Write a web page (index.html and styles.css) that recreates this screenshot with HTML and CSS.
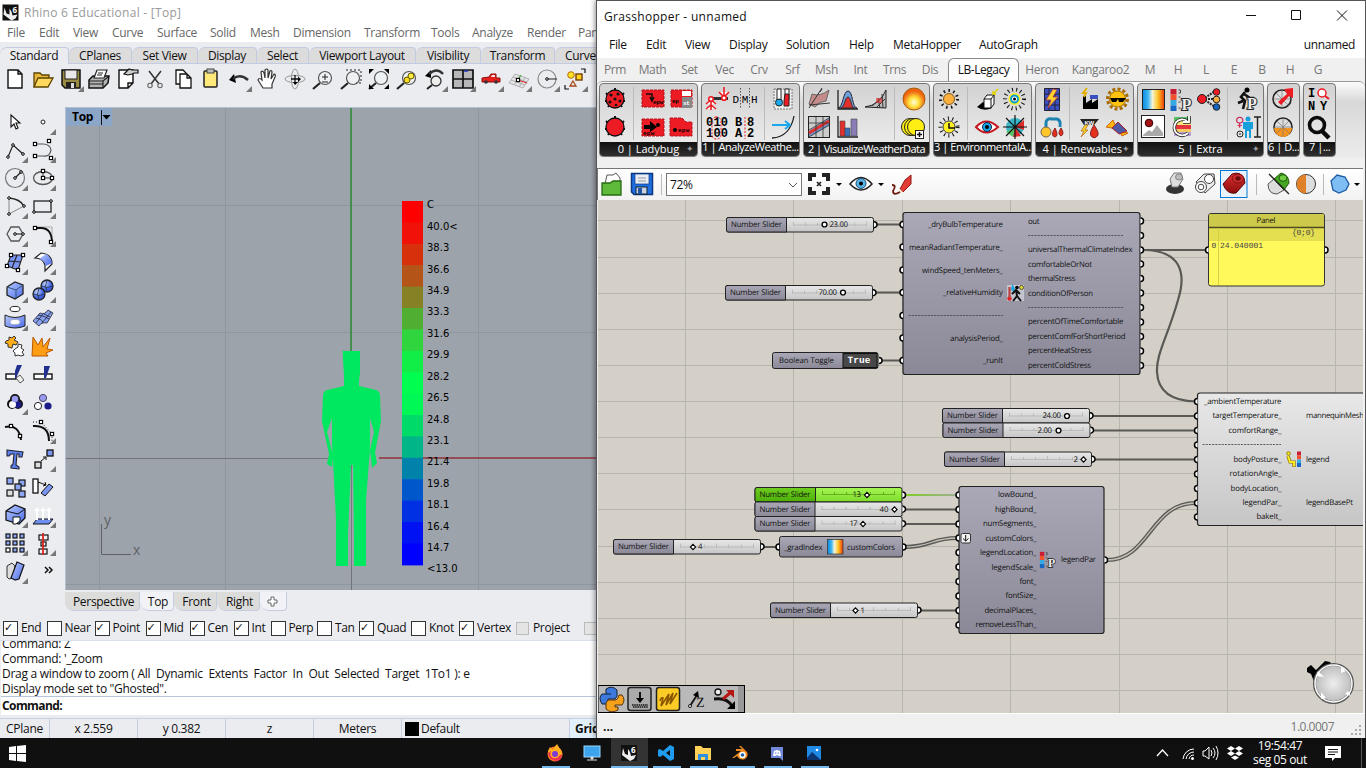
FILE: index.html
```html
<!DOCTYPE html>
<html lang="en">
<head>
<meta charset="utf-8">
<title>Rhino 6 and Grasshopper</title>
<link rel="stylesheet" href="styles.css">
</head>
<body>
<svg class="defs" width="0" height="0">
  <defs>
    <linearGradient id="gNode" x2="0" y2="1"><stop offset="0" stop-color="#aaa8b7"/><stop offset="1" stop-color="#8b8997"/></linearGradient>
    <linearGradient id="gLight" x2="0" y2="1"><stop offset="0" stop-color="#e8e8e8"/><stop offset="1" stop-color="#c6c6c6"/></linearGradient>
    <linearGradient id="gGreen" x2="0" y2="1"><stop offset="0" stop-color="#6fce20"/><stop offset="1" stop-color="#4cae08"/></linearGradient>
    <linearGradient id="gLime" x2="0" y2="1"><stop offset="0" stop-color="#a4f752"/><stop offset="1" stop-color="#7fdb2c"/></linearGradient>
    <linearGradient id="gSpec"><stop offset="0" stop-color="#0a8ae0"/><stop offset=".25" stop-color="#3db4f2"/><stop offset=".45" stop-color="#f4f4d8"/><stop offset=".7" stop-color="#ffc423"/><stop offset="1" stop-color="#e8380c"/></linearGradient>
    <linearGradient id="gBlue" x2="1" y2="1"><stop offset="0" stop-color="#b9cbff"/><stop offset="1" stop-color="#4a6ae8"/></linearGradient>
    <linearGradient id="gRed" x2="0" y2="1"><stop offset="0" stop-color="#e03030"/><stop offset="1" stop-color="#8c0c0c"/></linearGradient>
    <linearGradient id="gWire"><stop offset="0" stop-color="#7ccf2a"/><stop offset="1" stop-color="#9fae90"/></linearGradient>
    <radialGradient id="gSun" cy=".65"><stop offset="0" stop-color="#fffde0"/><stop offset=".45" stop-color="#ffe23c"/><stop offset="1" stop-color="#f06410"/></radialGradient>
    <radialGradient id="gBall" cx=".35" cy=".3"><stop offset="0" stop-color="#c6d5ff"/><stop offset="1" stop-color="#3c5ce0"/></radialGradient>
    <radialGradient id="gKnob"><stop offset="0" stop-color="#eee"/><stop offset="1" stop-color="#bbb"/></radialGradient>
    <polygon id="fly" points="13,7 13,13 7,13" fill="#777"/>
    <g id="lens"><path d="M-3,4L-10,10" stroke="#222" stroke-width="2.2"/><circle cx="2" cy="-1" r="6.500" fill="#eef1f4" stroke="#555" stroke-width="1.2"/></g>
    <rect id="pt" x="-1.6" y="-1.6" width="3.2" height="3.2" fill="#fff" stroke="#000" stroke-width="1.1"/>
    <circle id="dot" r="1.3" fill="#fff" stroke="#000"/>
    <g id="slider">
      <rect x=".5" y="0" width="147" height="14.5" rx="2" fill="url(#gLight)" stroke="#222"/>
      <path d="M2,0H60.5V14.5H2Q.5,14.5 .5,12.5V2Q.5,0 2,0Z" fill="url(#gNode)" stroke="#222"/>
      <path d="M67,7.500H141M67.5,4V8M79.5,5V8M91.5,5V8M103.5,4V8M115.5,5V8M128.5,5V8M140.5,4V8" stroke="#aaa" stroke-width=".6" fill="none"/>
      <path d="M148,4.2a3,3 0 0 1 0,6" fill="#fff" stroke="#000" stroke-width="1.5"/>
      <text x="5" y="9.500" textLength="51">Number Slider</text>
    </g>
    <circle id="kc" r="2.4" fill="#fff" stroke="#000" stroke-width="1.4"/>
    <path id="kd" d="M0,-2.6L2.6,0L0,2.6L-2.6,0Z" fill="#fff" stroke="#000" stroke-width="1.1"/>
    <path id="pin" d="M0,-3a3,3 0 0 0 0,6" fill="#fff" stroke="#000" stroke-width="1.5"/>
    <path id="pout" d="M0,-3a3,3 0 0 1 0,6" fill="#fff" stroke="#000" stroke-width="1.5"/>
    <g id="legicon"><rect x="-11" y="-11" width="6" height="5.5" fill="#c71d33"/><rect x="-11" y="-5.5" width="6" height="5.5" fill="#f0532d"/><rect x="-11" y="0" width="6" height="5.5" fill="#35a9e4"/><rect x="-11" y="5.5" width="6" height="5.5" fill="#1568c4"/><path d="M-3,-10h2v3h-2M-3,-3h2M-3,2h2M-3,8h2" stroke="#444" fill="none"/><text class="bigp" x="0" y="10">P</text></g>
    <g id="bug"><path d="M-9,-6L-6,-3M9,-6L6,-3M-10,2H10M-7,8L-4,4M7,8L4,4M0,-11V-8" stroke="#111" stroke-width="2"/><circle r="9" fill="#ed1c24" stroke="#111" stroke-width="1.3"/></g>
    <g id="rhino"><rect x="-8" y="-8" width="16" height="16" fill="#111"/><path d="M-6,-5L-4,1L-1,2L-1,-4L1,-1L2,3L7,2L5,6L1,8L-3,5L-7,2Z" fill="#eee"/><text class="six" x="2" y="0">6</text></g>
  </defs>
</svg>

<div class="desktop">
<section class="rhino">
  <header class="r-title"><svg width="17" height="17" viewBox="-8.5 -8.5 17 17"><use href="#rhino"/></svg><span>Rhino 6 Educational - [Top]</span></header>
  <nav class="r-menu"><span>File</span><span>Edit</span><span>View</span><span>Curve</span><span>Surface</span><span>Solid</span><span>Mesh</span><span>Dimension</span><span>Transform</span><span>Tools</span><span>Analyze</span><span>Render</span><span>Panels</span></nav>
  <div class="r-tabs"><span class="on">Standard</span><span>CPlanes</span><span>Set View</span><span>Display</span><span>Select</span><span>Viewport Layout</span><span>Visibility</span><span>Transform</span><span>Curve Tools</span></div>
  <div class="r-tools">
    <svg viewBox="-14 -14 28 28"><path d="M-7,-9H3L7,-5V9H-7ZM3,-9V-5H7" fill="#fff" stroke="#111" stroke-width="1.4"/></svg>
    <svg viewBox="-14 -14 28 28"><path d="M-9,8V-6H-3L-1,-4H6V0" fill="#e8b83c" stroke="#5c4400" stroke-width="1.3"/><path d="M-9,8L-5,-1H10L5,8Z" fill="#ffd85e" stroke="#5c4400" stroke-width="1.3"/></svg>
    <svg viewBox="-14 -14 28 28"><path d="M-9,-9H9V9H-6L-9,6Z" fill="#9a8b43" stroke="#111" stroke-width="1.5"/><rect x="-6" y="-9" width="12" height="9" fill="#e9e9e9" stroke="#222"/><rect x="-5" y="3" width="10" height="6" fill="#222"/><rect x="0" y="4" width="3" height="5" fill="#ddd"/><use href="#fly"/></svg>
    <svg viewBox="-14 -14 28 28"><path d="M-10,1L-6,-3H10L9,4L4,9H-10Z" fill="#b4b4b4" stroke="#111" stroke-width="1.5"/><path d="M-5,-1L-2,-9H8L5,-1Z" fill="#fff" stroke="#222" stroke-width="1.2"/><path d="M-10,2H4L9,-2M-9,5H4M-1,-6H4M-2,-4H3M4,2V9" stroke="#222" stroke-width="1.2" fill="none"/></svg>
    <svg viewBox="-14 -14 28 28"><path d="M-8,-9H6V4L1,9H-8ZM1,9V4H6" fill="#fff" stroke="#111" stroke-width="1.4"/><path d="M-3,-5L2,-10L5,-9H11V-6H7L5,-5L1,-4Z" fill="#ccc" stroke="#111" stroke-width="1.2"/></svg>
    <svg viewBox="-14 -14 28 28"><path d="M-6,-8L4,5M6,-8L-4,5" stroke="#333" stroke-width="1.5"/><circle cx="-5" cy="6.500" r="2.200" fill="none" stroke="#666" stroke-width="1.1"/><circle cx="5" cy="6.500" r="2.200" fill="none" stroke="#666" stroke-width="1.1"/></svg>
    <svg viewBox="-14 -14 28 28"><path d="M-7,-9H0L3,-6V5H-7Z" fill="#fff" stroke="#111" stroke-width="1.3"/><path d="M-3,-5H4L8,-1V9H-3ZM4,-5V-1H8" fill="#fff" stroke="#111" stroke-width="1.3"/></svg>
    <svg viewBox="-14 -14 28 28"><rect x="-7" y="-8" width="13" height="16" rx="1" fill="#ffe97a" stroke="#222" stroke-width="1.5"/><rect x="-4" y="-10" width="7" height="4" fill="#bbb" stroke="#444"/></svg>
    <svg viewBox="-14 -14 28 28"><path d="M-10,1L-5,-5L-3,4Z"/><path d="M-6,0Q1,-6 9,1" fill="none" stroke="#333" stroke-width="2.6"/><use href="#fly"/></svg>
    <svg viewBox="-14 -14 28 28"><path d="M-4,9L-9,1Q-8,-2 -5,1L-6,-7Q-4,-9 -3,-6L-2,-1V-9Q0,-11 1,-9V-1L3,-8Q5,-9 5,-7L4,0L7,-5Q9,-5 8,-2L5,5V9Z" fill="#fff" stroke="#333" stroke-width="1.2"/></svg>
    <svg viewBox="-14 -14 28 28"><ellipse rx="10" ry="3.6" fill="none" stroke="#999"/><ellipse rx="3.6" ry="10" fill="none" stroke="#999"/><path d="M-4,0H5M0,-4V5" stroke="#111" stroke-width="1.3"/><path d="M3,-2V3L6,0ZM-2,3H3L0,6Z"/></svg>
    <svg viewBox="-14 -14 28 28"><use href="#lens"/><path d="M-1,-2H5M2,-5V1M-1,3H5" stroke="#222"/></svg>
    <svg viewBox="-14 -14 28 28"><use href="#lens"/><path d="M-5,-9H10V4H5" fill="none" stroke="#222" stroke-dasharray="2 2"/></svg>
    <svg viewBox="-14 -14 28 28"><use href="#lens"/><path d="M-10,-10h5l-5,5ZM10,-10v5l-5,-5ZM10,10h-5l5,-5ZM-10,10v-5l5,5Z"/></svg>
    <svg viewBox="-14 -14 28 28"><use href="#lens"/><circle cx="0" cy="1" r="3" fill="#f6dc1e" stroke="#665500"/><circle cx="4" cy="-3" r="3" fill="#ffed3c" stroke="#665500"/></svg>
    <svg viewBox="-14 -14 28 28"><circle cx="1" cy="2" r="5" fill="#eee" stroke="#333" stroke-width="1.3"/><path d="M-3,6L-8,10" stroke="#222" stroke-width="2"/><path d="M-10,-3L-4,-9V-1Z"/><path d="M-6,-5Q2,-12 8,-5" fill="none" stroke="#333" stroke-width="2.4"/><use href="#fly"/></svg>
    <svg viewBox="-14 -14 28 28"><path d="M-10,-9H10V9H-10ZM0,-9V9M-10,0H10" fill="#b7b7b9" stroke="#111" stroke-width="1.7"/><path d="M1,-8H5" stroke="#23b" stroke-width="1.5"/><use href="#fly"/></svg>
    <svg viewBox="-14 -14 28 28"><path d="M-9,-1L-2,-2L0,-5H5V-1H9V3H-9Z" fill="#e2211d" stroke="#8c0c0c"/><path d="M1,-4H4V-2H0Z" fill="#fdd"/><circle cx="-5" cy="3" r="1.800" fill="#333"/><circle cx="5" cy="3" r="1.800" fill="#333"/><use href="#fly"/></svg>
    <svg viewBox="-14 -14 28 28"><path d="M-10,4L-4,-5L10,0L4,9ZM-8,1L6,6M-6,-2L8,3M-5,6L1,-3M0,8L6,-1" fill="#e4e4e6" stroke="#aaa" stroke-width=".9"/><path d="M-1,1L8,4" stroke="#d22"/><path d="M-1,1L2,-4" stroke="#2a2"/><use href="#pt" x="-1" y="1"/><use href="#fly"/></svg>
    <svg viewBox="-14 -14 28 28"><circle r="9" fill="none" stroke="#888" stroke-width="1.2"/><path d="M0,0H10" stroke="#222"/><use href="#dot"/><use href="#fly"/></svg>
    <svg viewBox="-14 -14 28 28"><circle cx="-4" cy="-4" r="3.3" fill="#ffe321" stroke="#b86a10"/><rect x="1" y="-5" width="6" height="6" fill="#ffd51e" stroke="#7a3c00" stroke-width="1.4"/><path d="M-2,2L1,7H-5Z" fill="none" stroke="#a64a1c" stroke-width="1.3"/><path d="M6,-10h4v4M-10,6v4h4" fill="none" stroke="#111" stroke-width="1.2"/><use href="#fly"/></svg>
  </div>
  <div class="r-mid">
    <aside class="palette">
      <svg viewBox="-14 -14 28 28"><path d="M-4,-7V5L-1,2L1,7L3,6L1,1H5Z" fill="#fff" stroke="#111" stroke-width="1.1"/></svg>
      <svg viewBox="-14 -14 28 28"><circle r="2" fill="#fff" stroke="#222"/><use href="#fly"/></svg>
      <svg viewBox="-14 -14 28 28"><path d="M-7,7L-2,-5L8,4" fill="none" stroke="#222" stroke-width="1.2"/><use href="#dot" x="-7" y="7"/><use href="#dot" x="-2" y="-5"/><use href="#dot" x="8" y="4"/><use href="#fly"/></svg>
      <svg viewBox="-14 -14 28 28"><path d="M-8,-6H0Q7,-6 8,0Q7,7 0,6H-8" fill="none" stroke="#555" stroke-width="1.2"/><use href="#pt" x="-8" y="-6"/><use href="#pt" x="-8" y="6"/><use href="#pt" x="6" y="-9"/><use href="#pt" x="8" y="8"/><use href="#fly"/></svg>
      <svg viewBox="-14 -14 28 28"><circle r="9.5" fill="none" stroke="#777" stroke-width="1.2"/><path d="M0,0L6,-6" stroke="#222" stroke-width="1.3"/><use href="#dot"/><use href="#dot" x="6" y="-6"/><use href="#fly"/></svg>
      <svg viewBox="-14 -14 28 28"><ellipse rx="9.5" ry="6.5" fill="none" stroke="#555" stroke-width="1.3"/><path d="M0,-6V0H9" stroke="#333" fill="none"/><use href="#pt"/><use href="#pt" y="-7"/><use href="#pt" x="9"/><use href="#fly"/></svg>
      <svg viewBox="-14 -14 28 28"><path d="M-6,-8V8L9,0" fill="none" stroke="#888"/><path d="M-6,-8Q5,-7 9,0" fill="none" stroke="#222" stroke-width="1.3"/><use href="#dot" x="-6" y="-8"/><use href="#dot" x="-6" y="8"/><use href="#dot" x="9"/><use href="#fly"/></svg>
      <svg viewBox="-14 -14 28 28"><rect x="-9" y="-5" width="17" height="11" fill="none" stroke="#333" stroke-width="1.4"/><use href="#dot" x="-9" y="6"/><use href="#dot" x="8" y="-5"/><use href="#fly"/></svg>
      <svg viewBox="-14 -14 28 28"><path d="M-8,0L-4,-7H4L8,0L4,7H-4Z" fill="none" stroke="#555" stroke-width="1.3"/><path d="M0,0H8" stroke="#111"/><use href="#dot"/><use href="#dot" x="8"/><use href="#fly"/></svg>
      <svg viewBox="-14 -14 28 28"><path d="M-8,-7H9V9" fill="none" stroke="#aaa"/><path d="M-8,-6H-2Q9,-6 9,9" fill="none" stroke="#111" stroke-width="1.9"/><use href="#pt" x="-8" y="-6"/><use href="#pt" x="8" y="8"/><use href="#fly"/></svg>
      <svg viewBox="-14 -14 28 28"><path d="M-4,-7L8,-7L3,8L-8,4ZM-6,-1L6,0M2,-7L-3,6" fill="#7b95f2" stroke="#222" stroke-width="1.1"/><use href="#pt" x="-4" y="-7"/><use href="#pt" x="8" y="-7"/><use href="#pt" x="3" y="8"/><use href="#pt" x="-8" y="4"/><use href="#fly"/></svg>
      <svg viewBox="-14 -14 28 28"><path d="M-8,-4L-2,-9Q9,-8 9,2L2,9V3Q0,-4 -8,-4Z" fill="#fff" stroke="#222" stroke-width="1.2"/><path d="M-4,-3L3,-8Q8,-5 9,1L3,4Q1,-2 -4,-3" fill="url(#gBlue)"/><use href="#fly"/></svg>
      <svg viewBox="-14 -14 28 28"><path d="M-8,-3L0,-8L8,-5V4L0,9L-8,5Z" fill="url(#gBlue)" stroke="#222" stroke-width="1.3"/><path d="M-8,-3L1,0V8M1,0L8,-5" fill="none" stroke="#357"/><use href="#fly"/></svg>
      <svg viewBox="-14 -14 28 28"><circle cx="4" cy="-4" r="6" fill="url(#gBall)" stroke="#222" stroke-width="1.3"/><path d="M-2,-4Q4,-1 10,-4M4,-10Q1,-4 4,2" stroke="#234" stroke-width=".8" fill="none"/><circle cx="-4" cy="4" r="6" fill="url(#gBall)" stroke="#222" stroke-width="1.3"/><path d="M-10,4Q-4,7 2,4M-4,-2Q-7,4 -4,10" stroke="#234" stroke-width=".8" fill="none"/><use href="#fly"/></svg>
      <svg viewBox="-14 -14 28 28"><ellipse cy="-9" rx="5" ry="2.6" fill="#fff" stroke="#222"/><path d="M-10,-3Q0,2 10,-3V8Q0,12 -10,8Z" fill="url(#gBlue)" stroke="#222"/><ellipse cy="4" rx="5" ry="2.6" fill="#fff" stroke="#aac"/><use href="#fly"/></svg>
      <svg viewBox="-14 -14 28 28"><path d="M-10,3L-3,-5Q2,-3 5,-8L10,-5L4,5Q-2,4 -4,8ZM-7,5L0,-4M-1,5L8,-6M-7,0Q-1,1 0,4M-5,-3Q2,-2 6,1M1,-4L7,-1" fill="#86a2ef" stroke="#223" stroke-width=".8"/><use href="#fly"/></svg>
      <svg viewBox="-14 -14 28 28"><path d="M-9,-5l3,-1l0,-3l3,1l2,-2l2,2l-2,2l4,2l-2,3l-3,-1l-1,4l-4,-1l0,-3l-3,-1Z" fill="#ffae1a" stroke="#333"/><path d="M0,3l3,-2l0,-3l4,1l-1,3l3,2l-2,2l2,3l-3,1l-3,-1l-3,1l0,-3l-2,-2Z" fill="#fff" stroke="#333"/></svg>
      <svg viewBox="-14 -14 28 28"><path d="M-11,10L-10,-9L-5,-1L-1,-8L0,1L7,-8L4,3L10,4L3,7L5,10Z" fill="#ff9d14" stroke="#b85800"/></svg>
      <svg viewBox="-14 -14 28 28"><rect x="-9" y="0" width="10" height="5" fill="#fff" stroke="#111" stroke-width="1.4"/><path d="M1,4L5,1L9,6L5,9Z" fill="#eee" stroke="#555"/><path d="M2,-9H7L1,4H0V-3Z" fill="#20308c"/></svg>
      <svg viewBox="-14 -14 28 28"><rect x="-9" y="0" width="18" height="5" fill="#fff" stroke="#111" stroke-width="1.4"/><path d="M1,-8H7L3,4H1Z" fill="#20308c"/></svg>
      <svg viewBox="-14 -14 28 28"><g stroke="#111" stroke-width="4"><circle cx="0" cy="-3" r="3"/><circle cx="-3" cy="2" r="3"/><circle cx="3" cy="2" r="3"/></g><circle cx="3" cy="2.500" r="3.500" fill="#1c1c88"/><circle cx="-2.500" cy="2.500" r="3.500" fill="#fff"/><circle cx="0" cy="-3" r="3.300" fill="#9a9af0"/><use href="#fly"/></svg>
      <svg viewBox="-14 -14 28 28"><circle cx="0" cy="-4" r="3.6" fill="#9a9af0" stroke="#446"/><circle cx="-5" cy="4" r="3.6" fill="#fff" stroke="#222"/><circle cx="5" cy="4" r="3.6" fill="#1c1c88"/></svg>
      <svg viewBox="-14 -14 28 28"><path d="M-10,-4Q4,-7 6,9" fill="none" stroke="#111" stroke-width="1.9"/><use href="#pt" x="-4" y="-5"/><use href="#pt" x="5" y="5"/></svg>
      <svg viewBox="-14 -14 28 28"><path d="M-10,-5Q6,-6 6,10" fill="none" stroke="#111" stroke-width="2"/><path d="M-10,-9H-2L9,3V10" fill="none" stroke="#111" stroke-dasharray="1 2"/><use href="#pt" x="-2" y="-9"/><use href="#pt" x="9" y="3"/><use href="#fly"/></svg>
      <svg viewBox="-14 -14 28 28"><path d="M-8,-9L8,-7L7,-2H4V-5H2L1,6L4,8V10L-4,9V7L-2,5L-1,-5H-4L-6,-3H-8Z" fill="#5b80e8" stroke="#223" stroke-width="1.1"/></svg>
      <svg viewBox="-14 -14 28 28"><rect x="4" y="-9" width="6" height="6" fill="#7b95f2" stroke="#111" stroke-width="1.3"/><rect x="-8" y="3" width="6" height="6" fill="#ddd" stroke="#111" stroke-width="1.3"/><path d="M-2,2L3,-2M0,-2H3V1" stroke="#111" fill="none"/><use href="#fly"/></svg>
      <svg viewBox="-14 -14 28 28"><g fill="#8fa8f6" stroke="#111" stroke-width="1.2"><rect x="-8" y="-9" width="6" height="6"/><rect x="4" y="-7" width="6" height="6"/><rect x="0" y="-3" width="6" height="6"/><rect x="4" y="4" width="6" height="6"/><rect x="-8" y="3" width="6" height="6" fill="#ddd"/></g></svg>
      <svg viewBox="-14 -14 28 28"><rect x="-10" y="-8" width="5" height="14" fill="#fff" stroke="#111" stroke-width="1.3"/><path d="M-2,6L6,-3L10,0L2,9Z" fill="#7b95f2" stroke="#111"/><path d="M-5,-5L3,-2M2,-5L3,-2L0,-1" fill="none" stroke="#111"/></svg>
      <svg viewBox="-14 -14 28 28"><path d="M-9,-4L0,-10L10,-6V3L4,9L-9,5Z" fill="url(#gBlue)" stroke="#111" stroke-width="1.3"/><path d="M-9,-4L3,-1L10,-6" fill="none" stroke="#111"/><path d="M-2,2H5V6L1,9H-2Z" fill="#fff" stroke="#111"/><use href="#fly"/></svg>
      <svg viewBox="-14 -14 28 28"><path d="M-10,9L-6,4H10L6,9Z" fill="#6f8ff0" stroke="#111"/><path d="M-6,5V-6M0,5V-6M6,5V-6" stroke="#fff" stroke-width="2"/><path d="M-9,-4L-6,-8L-3,-4L0,-8L3,-4L6,-8L9,-4" fill="#fff"/><use href="#fly"/></svg>
      <svg viewBox="-14 -14 28 28"><g fill="#8fa8f6" stroke="#111" stroke-width="1.2"><rect x="-9" y="-9" width="4" height="4"/><rect x="-2" y="-9" width="4" height="4"/><rect x="5" y="-9" width="4" height="4"/><rect x="-9" y="-2" width="4" height="4"/><rect x="-2" y="-2" width="4" height="4"/><rect x="5" y="-2" width="4" height="4"/><rect x="-9" y="5" width="4" height="4" fill="#fff"/><rect x="-2" y="5" width="4" height="4"/><rect x="5" y="5" width="4" height="4"/></g><use href="#fly"/></svg>
      <svg viewBox="-14 -14 28 28"><g fill="#eee" stroke="#111" stroke-width="1.2"><rect x="-4" y="-8" width="9" height="5"/><rect x="-2" y="-1" width="5" height="4"/><rect x="-4" y="6" width="8" height="5"/></g><path d="M0,-10V12" stroke="#d22" stroke-width="1.8"/><use href="#fly"/></svg>
      <svg viewBox="-14 -14 28 28"><path d="M-8,-5L-3,-8L0,-5L-2,7L-6,8L-8,6Z" fill="#ddd" stroke="#333"/><path d="M0,9L-4,7L2,-9L9,-6L4,8Z" fill="url(#gBlue)" stroke="#111" stroke-width="1.2"/><use href="#fly"/></svg>
      <svg viewBox="-14 -14 28 28"><path d="M2,-4L5,-1L2,2M6,-4L9,-1L6,2" fill="none" stroke="#111" stroke-width="1.5"/></svg>
    </aside>
    <svg class="view" viewBox="65 107 531 483">
      <rect x="65" y="107" width="531" height="483" fill="#9da3ab"/>
      <path d="M99.5,108V590M225.5,108V590M478.5,108V590M66,205.5H596M66,332.5H596M66,584.5H596" stroke="#8f969d"/>
      <path d="M66,458.5H351M351.5,458V590" stroke="#70757a"/>
      <path d="M351,108V352" stroke="#2f8a38" stroke-width="1.6"/>
      <path d="M379,458H596" stroke="#92323c" stroke-width="1.6"/>
      <path d="M65.5,590V107.5H596" stroke="#b5bfd4" fill="none"/>
      <rect x="66" y="108" width="46" height="18" fill="#8ba6c6"/>
      <text x="72" y="121" class="vname">Top</text>
      <path d="M101.5,110V125" stroke="#111"/><path d="M102.500,115H110.500L106.500,119.500Z"/>
      <path d="M342.500,351H360V373Q359,378 359,386L376,390Q380,391 380,396L381,421L375,453L377,463L372,468L370,450L374,432L370,418V444Q370,454 369,462L366,500V566H354V534L353,465L351,465L348,534V566H336V520L334,480L332,444V418L327,432L333,455L332,467L327,464L329,454L322,421L323,396Q323,391 327,390L344,386V376Z" fill="#00e85f"/>
      <path d="M351.500,466V566" stroke="#777b80"/>
      <g class="scale">
        <path fill="#f00" d="M402,201h21v22h-21z"/><path fill="#f01108" d="M402,222.400h21v22h-21z"/><path fill="#d7300c" d="M402,243.800h21v22h-21z"/><path fill="#b45419" d="M402,265.200h21v22h-21z"/><path fill="#878126" d="M402,286.600h21v22h-21z"/><path fill="#50ae32" d="M402,308h21v22h-21z"/><path fill="#30d53e" d="M402,329.400h21v22h-21z"/><path fill="#11ee48" d="M402,350.800h21v22h-21z"/><path fill="#00fd50" d="M402,372.200h21v22h-21z"/><path fill="#00f856" d="M402,393.600h21v22h-21z"/><path fill="#00da68" d="M402,415h21v22h-21z"/><path fill="#00b588" d="M402,436.400h21v22h-21z"/><path fill="#0082ab" d="M402,457.800h21v22h-21z"/><path fill="#0057cc" d="M402,479.200h21v22h-21z"/><path fill="#0030e3" d="M402,500.600h21v22h-21z"/><path fill="#0012f4" d="M402,522h21v22h-21z"/><path fill="#00f" d="M402,543.400h21v22h-21z"/>
        <text x="427" y="208">C</text><text x="427" y="230">40.0&lt;</text><text x="427" y="251">38.3</text><text x="427" y="273">36.6</text><text x="427" y="294">34.9</text><text x="427" y="315">33.3</text><text x="427" y="337">31.6</text><text x="427" y="358">29.9</text><text x="427" y="380">28.2</text><text x="427" y="401">26.5</text><text x="427" y="423">24.8</text><text x="427" y="444">23.1</text><text x="427" y="465">21.4</text><text x="427" y="487">19.8</text><text x="427" y="508">18.1</text><text x="427" y="530">16.4</text><text x="427" y="551">14.7</text><text x="427" y="572">&lt;13.0</text>
      </g>
      <path d="M101.500,524V554.500H131" fill="none" stroke="#5d6267"/>
      <text x="104" y="525" class="axis">y</text><text x="133" y="555" class="axis">x</text>
    </svg>
  </div>
  <div class="v-tabs"><span>Perspective</span><span class="on">Top</span><span>Front</span><span>Right</span><span class="on"><svg width="11" height="11" viewBox="0 0 11 11"><path d="M4,1H7V4H10V7H7V10H4V7H1V4H4Z" fill="#fff" stroke="#666"/></svg></span></div>
  <div class="snaps"><span class="c">End</span><span>Near</span><span class="c">Point</span><span class="c">Mid</span><span class="c">Cen</span><span class="c">Int</span><span>Perp</span><span>Tan</span><span class="c">Quad</span><span>Knot</span><span class="c">Vertex</span><span class="dim">Project</span><span class="dim"></span></div>
  <div class="history"><p>Command: Z</p><p>Command: '_Zoom</p><p class="long">Drag a window to zoom ( All&nbsp; Dynamic&nbsp; Extents&nbsp; Factor&nbsp; In&nbsp; Out&nbsp; Selected&nbsp; Target&nbsp; 1To1 ): e</p><p>Display mode set to "Ghosted".</p></div>
  <div class="prompt">Command:</div>
  <footer class="r-status"><span>CPlane</span><span>x 2.559</span><span>y 0.382</span><span>z</span><span>Meters</span><span class="layer"><i></i>Default</span><b>Grid Snap</b></footer>
</section>

<section class="gh">
  <header class="g-title"><span>Grasshopper - unnamed</span>
    <svg width="140" height="31" viewBox="1225 1 140 31" fill="none" stroke="#111"><path d="M1246,15.500H1256M1291.500,10.500H1300.500V19.500H1291.500ZM1337,10.500L1347,20.500M1347,10.500L1337,20.500"/></svg></header>
  <nav class="g-menu"><span>File</span><span>Edit</span><span>View</span><span>Display</span><span>Solution</span><span>Help</span><span>MetaHopper</span><span>AutoGraph</span><em>unnamed</em></nav>
  <nav class="g-tabs"><span>Prm</span><span>Math</span><span>Set</span><span>Vec</span><span>Crv</span><span>Srf</span><span>Msh</span><span>Int</span><span>Trns</span><span>Dis</span><span class="on">LB-Legacy</span><span>Heron</span><span>Kangaroo2</span><span>M</span><span>H</span><span>L</span><span>E</span><span>B</span><span>H</span><span>G</span></nav>
  <div class="ribbon">
    <div class="grp"><svg width="97" height="58" viewBox="600 84 97 58">
      <path class="sep" d="M633.500,87V140"/>
      <use href="#bug" x="615" y="99"/><g fill="#111"><circle cx="611" cy="95" r="1.600"/><circle cx="618" cy="94" r="1.600"/><circle cx="615" cy="99" r="1.600"/><circle cx="610" cy="102" r="1.600"/><circle cx="620" cy="101" r="1.600"/><circle cx="616" cy="105" r="1.300"/></g><use href="#bug" x="615" y="127"/>
      <g fill="#ed1c24" stroke="#b3121a" stroke-dasharray="3 1"><rect x="642" y="90" width="22" height="17"/><path d="M671,90H692V107H671Z"/><path d="M642,119H664V136H642Z"/><path d="M670,118H682L686,122H692V136H670Z"/></g>
      <rect x="682" y="97" width="10" height="11" fill="#888"/><path d="M682,91H691V96H682Z" fill="#fff"/>
      <path d="M646,94H652V100M650,97L652,101L654,97" stroke="#111" stroke-width="1.500" fill="none"/><path d="M644,125H650V121L657,127L650,132V129H644Z"/><circle cx="658" cy="125" r="2"/><circle cx="675" cy="130" r="2"/>
      <text class="epw" x="653" y="104" textLength="10">epw</text><text class="epw" x="672" y="103">ep</text><text class="epw" x="683" y="105" fill="#fff">st</text><text class="epw" x="643" y="135" textLength="11">epw</text><text class="epw" x="678" y="132" textLength="11">epw</text></svg>
      <div class="cap plus">0 | Ladybug</div></div>
    <div class="grp"><svg width="97" height="58" viewBox="702 84 97 58">
      <path class="sep" d="M764.500,87V140"/>
      <path d="M710,97H728V100H710" fill="#333"/><g stroke="#ed1c24" stroke-width="1.600" fill="#fff"><path d="M711,99V110M706,104L711,100L716,104M706,109L711,105L716,109M724,87V98M719,92L724,97L729,92"/><circle cx="711" cy="99" r="2.300"/><circle cx="724" cy="98" r="2.300"/></g>
      <text class="mono" x="732.500" y="103" textLength="25">DMH</text><path d="M740.500,88V109M749.500,88V109" stroke="#555" stroke-dasharray="1.500 1.500"/>
      <text class="mono b" x="706" y="126" textLength="22">010</text><text class="mono b" x="706" y="137" textLength="22">100</text><rect x="712" y="117" width="9" height="22" rx="4" fill="none" stroke="#ed1c24" stroke-dasharray="2 1.500"/>
      <text class="mono b" x="735" y="126">B</text><text class="mono b" x="747" y="126">8</text><text class="mono b" x="735" y="137">A</text><text class="mono b" x="747" y="137">2</text><path d="M745,117V139" stroke="#ed1c24" stroke-dasharray="2 1.500"/>
      <path d="M774,89H792V109H774Z" fill="#eee" stroke="#777" stroke-dasharray="2 1"/><g stroke="#222"><path d="M777,89H781V100H777ZM785,89H789V100H785Z" fill="#fff"/><circle cx="779" cy="102.500" r="3.500" fill="#1aa7ec"/><path d="M785,94H789V106H784V101Z" fill="#ed1c24"/></g>
      <path d="M772,138Q790,137 794,116" fill="none" stroke="#222" stroke-width="1.300"/><path d="M772,125H790M785,121L790,125L785,129" stroke="#1aa7ec" stroke-width="2" fill="none"/></svg>
      <div class="cap up">1 | AnalyzeWeathe...</div></div>
    <div class="grp"><svg width="125" height="58" viewBox="804 84 125 58">
      <path class="sep" d="M894.500,87V140"/>
      <path d="M809,104L812,94Q820,97 829,90L826,101Q820,101 815,107Z" fill="#c58b8b" stroke="#666"/><path d="M809,108L822,88M809,105L830,103M822,89L820,92" stroke="#333"/>
      <path d="M838,108C843,108 843,91 848,91S852,108 857,108Z" fill="#6fa1dd" stroke="#223"/><path d="M841,108C845,106 845,97 848,97S851,107 854,108Z" fill="#e2302e" stroke="#333"/><path d="M838,90V109H858" stroke="#222" stroke-width="1.300" fill="none"/>
      <path d="M865,107Q880,105 886,90V108Z" fill="#bbb" stroke="#222"/><path d="M872,106L883,96M877,107L885,99M878,98L880,108M882,94L883,108" stroke="#333"/><rect x="876" y="98" width="6" height="5" fill="#e2302e" opacity=".6"/>
      <rect x="808.500" y="116.500" width="21" height="21" fill="#ccc" stroke="#222"/><path d="M809,131L829,118V126L809,137Z" fill="#7093c9"/><path d="M809,133L829,121" stroke="#e2302e" stroke-width="3"/><path d="M809,130L829,118M809,137L829,125M809,123H829M816,117V137M823,117V137" stroke="#333" stroke-width=".8"/>
      <path d="M838,116V137H858" stroke="#222" stroke-width="1.300" fill="none"/><g stroke="#444" stroke-width=".6"><path fill="#e2302e" d="M840,121h5v15h-5z"/><path fill="#3a70b8" d="M845,128h5v8h-5z"/><path fill="#8a7db5" d="M851,119h6v17h-6z"/></g>
      <circle cx="914" cy="99" r="11" fill="url(#gSun)" stroke="#a55f10"/><g fill="#ffee12" stroke="#222"><circle cx="910" cy="127" r="8.500"/><circle cx="913" cy="127" r="8.500"/><circle cx="916" cy="127" r="8.500"/></g><rect x="915.500" y="130.500" width="8" height="8" fill="#fff" stroke="#222"/><path d="M917,134.500H922M919.500,132V137" stroke="#111" stroke-width="1.500"/></svg>
      <div class="cap tight">2 | VisualizeWeatherData</div></div>
    <div class="grp"><svg width="97" height="58" viewBox="934 84 97 58">
      <path class="sep" d="M967.500,87V140"/>
      <circle cx="949" cy="99" r="8.500" fill="none" stroke="#111" stroke-width="3" stroke-dasharray="1.500 3.400"/><circle cx="949" cy="99" r="5.500" fill="#fbb040" stroke="#8a5a12"/>
      <circle cx="949" cy="127" r="8.500" fill="none" stroke="#111" stroke-width="4" stroke-dasharray="1 3.300"/><circle cx="949" cy="127" r="6" fill="#ffee22" stroke="#444"/><path d="M949,123V128H955" fill="none" stroke="#111" stroke-width="1.500"/>
      <path d="M977,107L983,102L992,108Q984,112 977,107Z"/><path d="M984,99L987,95H994V104L991,108H984ZM984,99H991V108M991,99L994,95" fill="#fff" stroke="#111"/><path d="M998,89L993,94M993,91V94H996" stroke="#e4d200" stroke-width="1.500" fill="none"/>
      <circle cx="1014.500" cy="99" r="9.500" fill="none" stroke="#111" stroke-width="4" stroke-dasharray="1 3.200"/><circle cx="1014.500" cy="99" r="6" fill="#ffee22"/><circle cx="1014.500" cy="99" r="3.500" fill="#fff" stroke="#08a0c8" stroke-width="2"/><circle cx="1014.500" cy="99" r="1.500"/>
      <path d="M976,127Q986,116 998,127Q986,138 976,127Z" fill="#fff" stroke="#c4161c" stroke-width="2"/><circle cx="987" cy="127" r="4.500" fill="#1aa7ec" stroke="#124"/><circle cx="987" cy="127" r="2"/>
      <circle cx="1015" cy="127" r="9" fill="#39b5c8"/><path d="M1015,127L1024,120L1024,130ZM1015,127L1021,136L1013,137Z" fill="#e02a2a"/><path d="M1015,127L1013,137L1006,132Z" fill="#58c464"/><path d="M1015,115V139M1003,127H1027M1006,118L1024,136M1024,118L1006,136" stroke="#111" stroke-width="1.200"/></svg>
      <div class="cap up">3 | EnvironmentalA...</div></div>
    <div class="grp"><svg width="97" height="58" viewBox="1036 84 97 58">
      <path class="sep" d="M1069.500,87V140"/>
      <path d="M1044.500,88.500H1059.500V110.500H1044.500ZM1044,94H1060M1044,99H1060M1044,105H1060M1049,88V110M1055,88V110" fill="#3c4fc0" stroke="#223"/><path d="M1053,89L1046,100H1051L1048,108L1058,97H1053L1057,90Z" fill="#ffd42a" stroke="#a45"/>
      <path d="M1046,129V123Q1046,118 1052,119H1057Q1061,120 1060,127" fill="none" stroke="#1d82b0" stroke-width="3"/><circle cx="1046" cy="132" r="5" fill="#ffc52a" stroke="#765"/><path d="M1055,128Q1050,136 1055,137Q1059,136 1055,128ZM1061,128Q1057,134 1061,136Q1065,134 1061,128Z" fill="#e4301c" stroke="#822"/>
      <path d="M1083,109V96H1086V103L1092,99V103L1098,99V109Z"/><path d="M1087,88L1083,93H1086L1084,97" fill="none" stroke="#e4b000" stroke-width="2"/><path d="M1090,95H1098V99H1090Z" fill="#3c4fc0"/>
      <circle cx="1117.500" cy="99" r="10" fill="none" stroke="#a66c00" stroke-width="3" stroke-dasharray="3 2.200"/><circle cx="1117.500" cy="99" r="8" fill="#ffc20e" stroke="#a66c00"/><path d="M1110,98H1126L1123,102H1119L1118,99L1116,102H1112Z"/>
      <path d="M1080,119H1099L1094,125H1084Z" fill="#222"/><text class="kw" x="1084.500" y="125">KW</text><path d="M1085,125L1081,131H1084L1081,137L1088,130H1085L1088,125Z" fill="#ffd42a" stroke="#a62" stroke-width=".700"/><path d="M1094,125Q1089,133 1091,136Q1095,140 1098,135Q1099,132 1094,125Z" fill="#e4301c" stroke="#822"/>
      <path d="M1106,127L1113,120L1117,129ZM1119,131L1128,133L1122,136Z" fill="#ffb511" stroke="#c61"/><path d="M1112,128L1118,122L1127,131L1119,134Z" fill="#505aa4" stroke="#a22"/></svg>
      <div class="cap plus">4 | Renewables</div></div>
    <div class="grp"><svg width="125" height="58" viewBox="1138 84 125 58">
      <path class="sep" d="M1227.500,87V140"/>
      <rect x="1142.500" y="89.500" width="22" height="20" fill="url(#gSpec)" stroke="#222"/><use href="#legicon" x="1181.500" y="100"/>
      <path d="M1205,98L1215,91M1205,99H1215M1205,100L1215,107" stroke="#222" stroke-width="2" stroke-dasharray="2 1"/><circle cx="1202" cy="99" r="4.500" fill="#ed1c24" stroke="#222"/><circle cx="1216.500" cy="92" r="3.300" fill="#ed1c24" stroke="#222"/><circle cx="1216.500" cy="99.500" r="3.300" fill="#fbb040" stroke="#222"/><circle cx="1216.500" cy="107" r="3.300" fill="#1465c0" stroke="#222"/>
      <rect x="1141.500" y="115.500" width="23" height="22" fill="#fff" stroke="#222"/><circle cx="1149" cy="123" r="3.800" fill="#a31515" stroke="#300"/><path d="M1143,135L1149,130L1152,132L1157,125L1163,133V136H1143Z" fill="#aaa"/>
      <path d="M1174,117h17v4h-17z" fill="#55c468"/><path d="M1174,121h17v4h-17z" fill="#f5e67b"/><path d="M1174,125h17v4h-17z" fill="#e53440"/><path d="M1174,129h17v3h-17z" fill="#f3ca66"/><path d="M1174,132h17v4h-17z" fill="#b8a0d6"/><path d="M1187,121A8,8 0 1 0 1188,133M1189,116V122H1183" fill="none" stroke="#222" stroke-width="3.400"/><path d="M1187,121A8,8 0 1 0 1188,133M1189,116V122H1183" fill="none" stroke="#fff" stroke-width="1.800"/>
      <circle cx="1247" cy="90" r="2.500"/><path d="M1245,92L1241,97L1245,101L1243,109M1244,94L1250,98L1254,98M1243,101L1238,103" fill="none" stroke="#111" stroke-width="2.600"/><text class="bigp" x="1247" y="109">P</text>
      <text class="female" x="1235" y="126">♀</text><circle cx="1240" cy="134" r="3" fill="none" stroke="#222"/><circle cx="1240" cy="134" r=".8"/><circle cx="1248" cy="119" r="2.500" fill="#18a0dc"/><path d="M1243,122H1253V129H1251V138H1249V131H1247V138H1245V129H1243Z" fill="#18a0dc"/><path d="M1257.500,117V137M1254,117H1261M1254,137H1261" stroke="#222" stroke-width="1.500"/></svg>
      <div class="cap plus">5 | Extra</div></div>
    <div class="grp"><svg width="31" height="58" viewBox="1268 84 31 58">
      <g fill="#ddd" stroke="#222" stroke-width="1.600"><circle cx="1282" cy="99" r="9"/><circle cx="1283" cy="127" r="9"/></g><path d="M1274,128H1292A9,9 0 0 1 1274,128" fill="#f7941d"/><path d="M1282,90V108M1273,99H1291M1276,93L1289,106M1283,118V136M1274,127H1292M1277,121L1290,134M1289,121L1277,133" stroke="#777" stroke-width=".7"/><path d="M1278,102L1287,94L1284,89L1293,88V98L1289,96L1281,105Z" fill="#ed1c24"/></svg>
      <div class="cap up">6 | D...</div></div>
    <div class="grp"><svg width="31" height="58" viewBox="1304 84 31 58">
      <text class="mono b" x="1308" y="97">I</text><text class="mono b" x="1308" y="110">N</text><text class="mono b" x="1320" y="110">Y</text><circle cx="1322" cy="93" r="4" fill="#fff" stroke="#ed1c24" stroke-width="1.500"/><path d="M1325,96L1329,99" stroke="#ed1c24" stroke-width="2"/>
      <circle cx="1317" cy="125" r="7.500" fill="none" stroke="#0c0c0c" stroke-width="3.600"/><path d="M1322,131L1329,138" stroke="#0c0c0c" stroke-width="4.500"/></svg>
      <div class="cap up">7 |...</div></div>
  </div>
  <div class="g-tools">
    <svg width="68" height="31" viewBox="598 169 68 31"><path d="M605,184L607,175H613L616,173L620,178V184Z" fill="#fff" stroke="#555"/><path d="M602,183H610L613,181H621V195H602Z" fill="#5fb93a" stroke="#246b12" stroke-width="1.300"/><path d="M631.500,173.500H652.500V194.500H634L631.500,192Z" fill="#1f6fe0" stroke="#0b3680" stroke-width="1.500"/><rect x="635" y="174" width="14" height="10" fill="#e9eef4" stroke="#0b3680" stroke-width=".7"/><path d="M638,178H646M638,181H646" stroke="#999"/><rect x="636" y="187" width="11" height="7" fill="#c8d2e0" stroke="#123"/><rect x="638" y="188" width="4" height="6" fill="#2255a5"/><path d="M661.500,174V195" stroke="#bbb"/></svg>
    <div class="zoomsel">72%<svg width="10" height="6" viewBox="0 0 10 6"><path d="M1,1L5,5L9,1" fill="none" stroke="#555"/></svg></div>
    <svg width="115" height="31" viewBox="802 169 115 31"><path d="M810,181V175H816M822,175H828V181M828,187V193H822M816,193H810V187" fill="none" stroke="#222" stroke-width="4"/><path d="M817,182L821,186M821,182L817,186" stroke="#222" stroke-width="1.700"/><path d="M836,183H842L839,186ZM878,183H884L881,186Z"/><path d="M850,184Q861,171 872,184Q861,196 850,184Z" fill="#fff" stroke="#222" stroke-width="1.500"/><circle cx="861" cy="183.500" r="5" fill="#56b4e8" stroke="#15486c"/><circle cx="861" cy="183.500" r="2"/><path d="M900,189L905,180L911,175L911,184L903,192Z" fill="#e23c36" stroke="#8e1512"/><path d="M900,189L903,192L899,193Z" fill="#ffe0c0"/><path d="M892,185Q897,185 893,191Q893,196 900,192" fill="none" stroke="#6d1a12" stroke-width="1.800"/></svg>
    <i class="grow"></i>
    <svg width="200" height="31" viewBox="1163 169 200 31">
      <ellipse cx="1175" cy="189" rx="9" ry="5" fill="#333"/><path d="M1170,179L1174,173H1181L1183,179L1178,187H1172Z" fill="#ddd" stroke="#777"/><ellipse cx="1179" cy="177" rx="3.500" ry="3" fill="#bbb" stroke="#888"/>
      <g fill="none" stroke="#444"><path d="M1196,182L1204,174L1214,174L1215,184L1205,193Z" fill="#eee"/><circle cx="1209" cy="179" r="4.500" fill="#fff"/><circle cx="1201" cy="187" r="5.500" fill="#fff"/><circle cx="1201" cy="187" r="2.800"/></g>
      <rect x="1220.500" y="170.500" width="26.500" height="27" fill="#eaf3fc" stroke="#0078d7"/><path d="M1223,184L1232,174Q1240,171 1244,178L1245,183L1236,193Q1227,195 1223,184Z" fill="url(#gRed)" stroke="#550808"/><ellipse cx="1238" cy="178.500" rx="5.500" ry="4.500" fill="#d23030" stroke="#7a1010"/><ellipse cx="1238" cy="178.500" rx="2.800" ry="2.200" fill="#6d0c0c"/>
      <path d="M1256.500,174V195M1323.500,174V195" stroke="#bbb"/>
      <path d="M1268,184L1274,179L1284,190L1277,194Q1268,194 1268,184Z" fill="#ddd" stroke="#555"/><path d="M1274,179L1281,173Q1289,175 1289,183L1284,190Z" fill="#43a520" stroke="#1d5a0a"/><ellipse cx="1283" cy="178" rx="4" ry="3.300" fill="#6dcc42" stroke="#1d5a0a"/><path d="M1269,174L1289,194" stroke="#222" stroke-width="1.300"/>
      <circle cx="1306" cy="184" r="9.500" fill="#ddd" stroke="#333"/><path d="M1306,174.500A9.500,9.500 0 0 0 1306,193.500Z" fill="#e0812a"/>
      <path d="M1331,181L1337,175L1345,177L1349,184L1346,190L1339,193L1333,190Z" fill="#7fbdf5" stroke="#1d5ba3" stroke-width="1.300"/><path d="M1354,183H1360L1357,186Z"/></svg>
  </div>
  <svg class="canvas" width="765" height="513" viewBox="598 200 765 513">
    <rect x="598" y="200" width="765" height="513" fill="#d4d0c8"/>
    <path d="M685.500,200V713M793.500,200V713M902.500,200V713M1010.500,200V713M1119.500,200V713M1227.500,200V713M1335.500,200V713M598,220.500H1363M598,257.500H1363M598,293.500H1363M598,329.500H1363M598,365.500H1363M598,401.500H1363M598,437.500H1363M598,473.500H1363M598,509.500H1363M598,546.500H1363M598,582.500H1363M598,618.500H1363M598,654.500H1363M598,690.500H1363" stroke="#b8b5ac"/>
    <g fill="none" stroke="#5a5955" stroke-width="2.200">
      <path d="M876,224.500H902M875,292.500H902M880,360.500H902M1143,250H1207M1092,416H1196M1093,430.500H1196M1095,459.500H1196M905,509.500H957M905,524H957M763,547H778M920,610.500H957"/>
      <path d="M1143,250C1180,250 1187,272 1178,300C1168,336 1156,354 1157,372C1158,392 1172,401 1196,401.500"/>
    </g>
    <rect x="905" y="494" width="52" height="2" fill="url(#gWire)"/>
    <g fill="none" stroke="#5a5955" stroke-width="4"><path d="M905,547C930,547 932,538 957,538M1107,560C1150,560 1150,503 1196,503"/></g>
    <g fill="none" stroke="#c4c1b9" stroke-width="1.300"><path d="M905,547C930,547 932,538 957,538M1107,560C1150,560 1150,503 1196,503"/></g>

    <rect x="903" y="212.500" width="237" height="162" rx="2.500" fill="url(#gNode)" stroke="#222" stroke-width="1.200"/>
    <g><use href="#pin" x="903" y="224.500"/><use href="#pin" x="903" y="247"/><use href="#pin" x="903" y="270"/><use href="#pin" x="903" y="292.500"/><use href="#pin" x="903" y="315.500"/><use href="#pin" x="903" y="338"/><use href="#pin" x="903" y="360.500"/>
    <use href="#pout" x="1140.500" y="221"/><use href="#pout" x="1140.500" y="235.500"/><use href="#pout" x="1140.500" y="250"/><use href="#pout" x="1140.500" y="264"/><use href="#pout" x="1140.500" y="278.500"/><use href="#pout" x="1140.500" y="293"/><use href="#pout" x="1140.500" y="307.500"/><use href="#pout" x="1140.500" y="322"/><use href="#pout" x="1140.500" y="336.500"/><use href="#pout" x="1140.500" y="351"/><use href="#pout" x="1140.500" y="365.500"/></g>
    <text x="928" y="227" textLength="75">_dryBulbTemperature</text><text x="909" y="249.500" textLength="94">meanRadiantTemperature_</text><text x="922" y="272.500" textLength="81">windSpeed_tenMeters_</text><text x="943" y="295" textLength="60">_relativeHumidity</text><path d="M908.500,315.500H1003M1028,235.500H1123M1028,307.500H1123" stroke="#444" stroke-width=".8" stroke-dasharray="2.200 1"/><text x="950" y="340.500" textLength="53">analysisPeriod_</text><text x="983" y="363" textLength="20">_runIt</text>
    <text x="1028" y="223.500" textLength="11.500">out</text><text x="1028" y="252" textLength="104.500">universalThermalClimateIndex</text><text x="1028" y="266.500" textLength="64">comfortableOrNot</text><text x="1028" y="281" textLength="47.500">thermalStress</text><text x="1028" y="295.500" textLength="65">conditionOfPerson</text><text x="1028" y="324" textLength="95.500">percentOfTimeComfortable</text><text x="1028" y="338.500" textLength="97.500">percentComfForShortPeriod</text><text x="1028" y="353" textLength="63.500">percentHeatStress</text><text x="1028" y="367.500" textLength="63">percentColdStress</text>
    <rect x="1007" y="285" width="17" height="16" fill="#c5c5cf"/><circle cx="1009.500" cy="298.500" r="2.200" fill="#e02020"/><path d="M1009.500,287V298" stroke="#b44" stroke-width="2.300"/><path d="M1012.500,284L1015,289A2,2 0 1 1 1011,289Z" fill="#19a5e0"/><circle cx="1021.500" cy="287.500" r="2" fill="#e4d338" stroke="#553"/><circle cx="1017" cy="287.500" r="1.800"/><path d="M1016,290L1017,296L1013,301M1017,296L1021,301M1012,294L1016,290L1020,294" fill="none" stroke="#111" stroke-width="2"/>

    <rect x="1208.500" y="213.500" width="116" height="72.500" rx="2.500" fill="#fff95c" stroke="#333"/><path d="M1209,227H1324V241H1209Z" fill="#e4df50"/><path d="M1211,214H1322Q1324,214 1324,216V227H1209V216Q1209,214 1211,214Z" fill="#cdc94b"/><path d="M1209,227.500H1324" stroke="#4c4a20" stroke-width="1.300"/><path d="M1218.500,228V285" stroke="#d5cf48"/>
    <use href="#pin" x="1208.500" y="250"/><use href="#pout" x="1325" y="250"/><text x="1256.500" y="222.500" textLength="19">Panel</text><text class="cour" x="1292" y="234.500" textLength="23">{0;0}</text><text class="cour" x="1211.500" y="247.500">0</text><text class="cour" x="1220" y="247.500" textLength="43">24.040001</text>

    <rect x="1197.500" y="393" width="180" height="132.500" rx="2.500" fill="url(#gLight)" stroke="#222" stroke-width="1.200"/>
    <use href="#pin" x="1197.500" y="401.500"/><use href="#pin" x="1197.500" y="416"/><use href="#pin" x="1197.500" y="430.500"/><use href="#pin" x="1197.500" y="445"/><use href="#pin" x="1197.500" y="459.500"/><use href="#pin" x="1197.500" y="474"/><use href="#pin" x="1197.500" y="488.500"/><use href="#pin" x="1197.500" y="503"/><use href="#pin" x="1197.500" y="517"/>
    <text x="1204" y="404" textLength="77.500">_ambientTemperature</text><text x="1212.500" y="418" textLength="69">targetTemperature_</text><text x="1228.500" y="432.500" textLength="53">comfortRange_</text><path d="M1202.500,444.500H1281" stroke="#444" stroke-width=".8" stroke-dasharray="2.200 1"/><text x="1233.500" y="461.500" textLength="48">bodyPosture_</text><text x="1229.500" y="475.500" textLength="52">rotationAngle_</text><text x="1230.500" y="490.500" textLength="51">bodyLocation_</text><text x="1242.500" y="505" textLength="39">legendPar_</text><text x="1256.500" y="519" textLength="25">bakeIt_</text>
    <text x="1306" y="418" textLength="58">mannequinMesh</text><text x="1306" y="461.500" textLength="23.500">legend</text><text x="1306" y="505" textLength="47">legendBasePt</text>
    <circle cx="1288.500" cy="453.500" r="1.800" fill="#ffe722" stroke="#776a00" stroke-width=".8"/><path d="M1288,456L1290,462H1294V467" fill="none" stroke="#776a00" stroke-width="3.200"/><path d="M1288,456L1290,462H1294V466.500" fill="none" stroke="#ffe722" stroke-width="2"/><path fill="#c71d33" d="M1297,451.500h4v4h-4z"/><path fill="#f0532d" d="M1297,455.500h4v4h-4z"/><path fill="#35a9e4" d="M1297,459.500h4v4h-4z"/><path fill="#1568c4" d="M1297,463h4v4h-4z"/>

    <rect x="959" y="486.500" width="145" height="147" rx="2.500" fill="url(#gNode)" stroke="#222" stroke-width="1.200"/>
    <use href="#pin" x="959" y="495"/><use href="#pin" x="959" y="509.500"/><use href="#pin" x="959" y="524"/><use href="#pin" x="959" y="538"/><use href="#pin" x="959" y="552.500"/><use href="#pin" x="959" y="567"/><use href="#pin" x="959" y="581.500"/><use href="#pin" x="959" y="596"/><use href="#pin" x="959" y="610.500"/><use href="#pin" x="959" y="625"/><use href="#pout" x="1104.500" y="560"/>
    <text x="998" y="497" textLength="38.500">lowBound_</text><text x="995" y="511.500" textLength="41.500">highBound_</text><text x="983" y="526" textLength="53.500">numSegments_</text><text x="985.500" y="540.500" textLength="51">customColors_</text><text x="980" y="555" textLength="56.500">legendLocation_</text><text x="991.500" y="569.500" textLength="45">legendScale_</text><text x="1019.500" y="583.500" textLength="17">font_</text><text x="1005.500" y="598" textLength="31">fontSize_</text><text x="984.500" y="612.500" textLength="52">decimalPlaces_</text><text x="975.500" y="627" textLength="61">removeLessThan_</text><text x="1061" y="562" textLength="35">legendPar</text>
    <rect x="961" y="533.500" width="9.500" height="9.500" rx="1.500" fill="#f2f2f2" stroke="#333"/><path d="M965.700,535V541M963,538.500L965.700,541L968.500,538.500" fill="none" stroke="#111"/>
    <use href="#legicon" transform="translate(1048,560) scale(.74)"/>

    <g><use href="#slider" x="726" y="217.500"/><use href="#kc" x="824.500" y="224.500"/><text x="829.500" y="227" textLength="18.500">23.00</text></g>
    <g><use href="#slider" x="725" y="285.500"/><use href="#kc" x="843" y="292.500"/><text x="818.500" y="295" textLength="18.500">70.00</text></g>
    <g><use href="#slider" x="942" y="408.500"/><use href="#kc" x="1067" y="416"/><text x="1042.500" y="418" textLength="18.500">24.00</text></g>
    <g><use href="#slider" x="942.500" y="423"/><use href="#kc" x="1058.500" y="430.500"/><text x="1037.500" y="432.500" textLength="14.500">2.00</text></g>
    <g><use href="#slider" x="944" y="452"/><use href="#kd" x="1083.500" y="459.500"/><text x="1073.500" y="461.500">2</text></g>
    <g><rect x="755" y="487.500" width="147" height="14.500" rx="2" fill="url(#gLime)" stroke="#222"/><path d="M757,487.500H815.500V502H757Q755,502 755,500V489.500Q755,487.500 757,487.500Z" fill="url(#gGreen)" stroke="#222"/><path d="M822,494.500H895M822.500,491V495M834.500,492V495M846.500,492V495M870.500,492V495M883.500,492V495M894.500,491V495" stroke="#5da020" stroke-width=".8"/><use href="#pout" x="902.500" y="495"/><use href="#kd" x="867" y="495"/><text x="759.500" y="497" textLength="51">Number Slider</text><text x="852.500" y="497" textLength="8.500">13</text></g>
    <g><use href="#slider" x="754.500" y="502"/><use href="#kd" x="894.500" y="509.500"/><text x="879.500" y="511.500" textLength="9">40</text></g>
    <g><use href="#slider" x="754.500" y="516.500"/><use href="#kd" x="863" y="524"/><text x="849.500" y="526" textLength="8">17</text></g>
    <g><use href="#slider" x="613" y="539.500"/><use href="#kd" x="693" y="547"/><text x="698" y="549">4</text></g>
    <g><use href="#slider" x="770" y="603"/><use href="#kd" x="855.500" y="610.500"/><text x="860.500" y="612.500">1</text></g>
    <rect x="772.500" y="352.500" width="105.500" height="16" rx="2" fill="url(#gNode)" stroke="#222"/><rect x="843" y="353.500" width="34" height="14" fill="#484848" stroke="#111"/><use href="#pout" x="879" y="360.500"/><text x="779" y="362.500" textLength="55">Boolean Toggle</text><text class="true" x="847.500" y="362.500" textLength="23">True</text>
    <rect x="779.500" y="536.500" width="123" height="20.500" rx="2" fill="url(#gNode)" stroke="#222"/><use href="#pin" x="779" y="547"/><use href="#pout" x="903" y="547"/><text x="784" y="549.500" textLength="38.500">_gradIndex</text><text x="847" y="549.500" textLength="48">customColors</text><rect x="827.500" y="539.500" width="15.500" height="14.500" fill="url(#gSpec)" stroke="#333" stroke-width=".7"/>

    <rect x="598" y="685.500" width="146.500" height="27" fill="#b9b9b9" stroke="#000"/><rect x="738" y="686" width="6" height="26" fill="#999"/>
    <path d="M606,694V689Q612,685 617,690V696L615,699H608V704H602Q598,698 602,694H611" fill="#3d79dd" stroke="#123"/><path d="M619,695H622Q626,700 622,705H615V707H618V710Q611,714 606,709V703L608,700H616Q618,699 619,695Z" fill="#f5a21a" stroke="#531"/>
    <rect x="628" y="687.500" width="23" height="23" rx="2.500" fill="#aaa" stroke="#222" stroke-width="1.500"/><path d="M640,692V699" stroke="#111" stroke-width="2"/><path d="M636,698H644L640,703Z"/><path d="M632,705H648M633,707H648" stroke="#111" stroke-width="1.500" stroke-dasharray="1.500 .7"/>
    <rect x="656.500" y="687.500" width="23" height="23" rx="2.500" fill="#fccb25" stroke="#222" stroke-width="1.500"/><path d="M660,701Q661,697 663,698L661,706L669,694L666,705L673,693L670,704L677,693" fill="none" stroke="#8a5700" stroke-width="1.600"/>
    <path d="M690,706L697,695" fill="none" stroke="#111" stroke-width="1.800"/><path d="M693,695L698,691L699,698Z"/><circle cx="690" cy="706" r="1.500" fill="#fff" stroke="#111"/><text class="zed" x="696" y="707">Z</text>
    <path d="M714,699Q727,697 732,706" fill="none" stroke="#111" stroke-width="3"/><path d="M735,701V709H727Z"/><circle cx="718" cy="692" r="3" fill="#eee" stroke="#111" stroke-width="1.300"/><path d="M723,699L730,693" fill="none" stroke="#b41616" stroke-width="3"/><path d="M726,690H734V698Z" fill="#b41616"/>
    <path d="M1307,668L1311,665L1316,670L1322,664L1325,661L1330,662L1332,665L1321,675L1315,684L1311,674L1307,672Z"/>
    <circle cx="1333.500" cy="683.500" r="19" fill="url(#gKnob)" stroke="#555" stroke-width="3"/><circle cx="1333.500" cy="683.500" r="18.500" fill="none" stroke="#fff" stroke-width="1.500"/><path d="M1318,671L1324,677L1316,676ZM1341,667L1346,671L1341,673ZM1348,691L1351,696L1345,694ZM1321,692L1326,698L1321,699Z" fill="#fff"/>
  </svg>
  <footer class="g-status"><b>...</b><span>1.0.0007</span><svg width="12" height="12" viewBox="0 0 12 12" fill="#aaa"><path d="M8,0h2v2h-2zM4,4h2v2h-2zM8,4h2v2h-2zM0,8h2v2h-2zM4,8h2v2h-2zM8,8h2v2h-2z"/></svg></footer>
</section>
</div>

<footer class="taskbar">
  <span class="start"><svg width="17" height="17" viewBox="0 0 17 17" fill="#fff"><path d="M0,2L7,1V8H0ZM8,1L17,0V8H8ZM0,9H7V16L0,15ZM8,9H17V17L8,16Z"/></svg></span>
  <div class="apps">
    <span class="run"><svg viewBox="-9 -9 18 18"><circle cy="1" r="7.500" fill="#ff7a18"/><path d="M-7,-2L-5,-6L-2,-3Q0,-7 2,-9L5,-4Q9,0 6,5Q0,10 -6,5Z" fill="#ffb01e"/><path d="M-7,0Q-6,8 2,8Q7,7 7,1L4,3Q2,6 -2,5Q-6,3 -4,-2Z" fill="#ee3150"/><circle cy="1" r="3" fill="#7b3bd8"/></svg></span>
    <span><svg viewBox="-9 -9 18 18"><rect x="-8" y="-7" width="16" height="11" fill="#3da5ee" stroke="#9cd8ff"/><path d="M-1,4H1V6H-1ZM-5,7H5" stroke="#ddd" fill="#ddd"/></svg></span>
    <span class="run act"><svg viewBox="-9 -9 18 18"><use href="#rhino"/></svg></span>
    <span class="run"><svg viewBox="-9 -9 18 18"><path d="M4,-8L8,-6V6L4,8L-3,2L-6,4L-8,3V-3L-6,-4L-3,-2ZM4,-3L0,0L4,3Z" fill="#1f9cf0" fill-rule="evenodd"/></svg></span>
    <span class="run"><svg viewBox="-9 -9 18 18"><path d="M-8,-7H-2L0,-5H8V7H-8Z" fill="#ffd257"/><path d="M-5,7V1H5V7H2V4H-2V7Z" fill="#2f8fe0"/></svg></span>
    <span class="run"><svg viewBox="-9 -9 18 18"><path d="M-8,5L1,-2H-4V-4H2L-1,-7L1,-7L7,-1Q9,3 5,6Q0,8 -3,3L-6,5Z" fill="#f08a1c"/><circle cx="2.500" cy="2" r="3.200" fill="#fff"/><circle cx="2.500" cy="2" r="1.800" fill="#235ea0"/></svg></span>
    <span class="run"><svg viewBox="-9 -9 18 18"><path d="M-6,-6H6V8L3,5H-6Z" fill="#7289da"/><path d="M-4,3L-3,-2L0,-3L3,-2L4,3L2,3L0,2L-2,3Z" fill="#fff"/><circle cx="-1.300" r=".8" fill="#7289da"/><circle cx="1.300" r=".8" fill="#7289da"/></svg></span>
    <span class="run"><svg viewBox="-9 -9 18 18"><rect x="-7" y="-7" width="14" height="14" fill="#1e8ae6"/><path d="M-7,5L-2,-1L7,7H-7Z" fill="#0b3470"/><circle cx="3" cy="-3" r="1.300" fill="#fff"/></svg></span>
  </div>
  <svg class="tray" width="96" height="30" viewBox="1152 738 96 30" fill="none" stroke="#fff"><path d="M1157,756L1162.500,750L1168,756" stroke-width="1.300"/><path d="M1183,759A11,11 0 0 1 1194,749M1186,759A8,8 0 0 1 1194,752M1189,759A5,5 0 0 1 1194,755"/><circle cx="1192.500" cy="758.500" r="1.500" fill="#fff" stroke="none"/><path d="M1203,751H1205L1209,747V759L1205,756H1203ZM1211,750Q1213,753 1211,756M1213,748Q1217,753 1213,758M1216,746Q1220,753 1216,760"/><path d="M1231,746l4,2.500l-4,2.500l-4,-2.500zM1239,746l4,2.500l-4,2.500l-4,-2.500zM1231,751l4,2.500l-4,2.500l-4,-2.500zM1239,751l4,2.500l-4,2.500l-4,-2.500zM1235,755.500l4,2l-4,2.500l-4,-2.500z" fill="#fff" stroke="none"/></svg>
  <div class="clock"><span>19:54:47</span><span>seg 05 out</span></div>
  <svg class="note" width="18" height="18" viewBox="0 0 18 18"><path d="M1,1H17V13H11L8,16V13H1Z" fill="#fff"/><path d="M4,4.500H14M4,7H14M4,9.500H11" stroke="#111"/></svg>
  <i class="peek"></i>
</footer>
</body>
</html>
```
FILE: styles.css
```css
* { box-sizing: border-box; }
body { margin: 0; width: 1366px; height: 768px; overflow: hidden; font: 12px/16px "Open Sans", "Noto Sans", sans-serif; letter-spacing: -0.3px; color: #111; background: #101010; }
svg { display: block; flex: none; }
.defs { position: absolute; }
.desktop { display: flex; height: 738px; }

.rhino { width: 596px; height: 738px; overflow: hidden; background: #ebecf0; display: flex; flex-direction: column; white-space: nowrap; }
.rhino > * { flex: none; }
.r-title { height: 24px; background: #fff; color: #999; display: flex; align-items: center; gap: 5px; padding: 1px 2px 0; letter-spacing: 0.27px; }
.r-menu { height: 18px; background: #fff; color: #666; padding-left: 7px; display: grid; grid-template-columns: 32px 34px 39px 45px 53px 40px 43px 71px 67px 41px 55px 51px 40px; align-items: center; letter-spacing: -0.28px; }
.r-tabs { height: 22px; padding-top: 5px; display: grid; grid-template-columns: 69px 63px 66px 59px 52px 107px 65px 74px 70px; border-bottom: 1px solid #c3cbe0; letter-spacing: -0.35px; }
.r-tabs span { background: #dcdcdd; text-align: center; border-top: 1px solid #c3cbe0; border-right: 1px solid #c3cbe0; border-radius: 7px 4px 0 0; line-height: 16px; height: 16px; }
.r-tabs span:last-child { text-align: left; padding-left: 10px; }
.r-tabs .on { background: #ebecf0; height: 17px; padding: 0; }
.r-tools { height: 43px; display: flex; padding: 1px 0 0 1px; }
.r-tools svg, .palette svg { width: 28px; height: 28px; overflow: visible; }
.r-mid { display: flex; height: 483px; }
.palette { width: 65px; display: grid; grid-template-columns: 28px 28px; grid-auto-rows: 28.06px; padding: 1px; }
.view { width: 531px; height: 483px; }
.vname { font: bold 12px "Open Sans", sans-serif; }
.axis { font: 14px "Open Sans", sans-serif; fill: #5d6267; }
.scale text { font: 10px "DejaVu Sans", sans-serif; letter-spacing: 0; }

.v-tabs { height: 28px; padding: 2px 0 0 65px; display: grid; grid-template-columns: 75px 34px 43px 43px 27px; }
.v-tabs span { height: 19px; text-align: center; background: #dcdcda; border: solid #c5cddf; border-width: 0 1px 1px 0; border-radius: 0 0 4px 9px; line-height: 20px; padding-left: 3px; }
.v-tabs .on { background: #f1f2f5; }
.v-tabs .on svg { margin: 4px auto 0 4px; }
.snaps { height: 23px; padding: 3px 0 0 3px; display: grid; grid-template-columns: 43.5px 48px 51px 44px 44px 37px 46.500px 42px 52px 48px 57px 68px 20px; border-bottom: 1px solid #dadfee; line-height: 13px; letter-spacing: -0.35px; }
.snaps span { display: flex; gap: 3px; }
.snaps span::before { content: ""; width: 13px; height: 13px; flex: none; border: 1px solid #333; background: #fff; font: 11px/11px "DejaVu Sans", sans-serif; letter-spacing: 0; }
.snaps .c::before { content: "✓"; }
.snaps .dim::before { border-color: #bbb; background: #e4e4e4; width: 11px; height: 11px; margin: 1px 1px 0 0; }
.history { height: 56px; margin-left: 1px; background: #fff; overflow: hidden; border-bottom: 1px solid #b8c4da; display: flex; flex-direction: column; justify-content: flex-end; letter-spacing: -0.3px; }
.history p { margin: 0 0 0 1px; height: 15px; line-height: 15px; flex: none; }
.history .long { letter-spacing: -0.27px; }
.prompt { height: 18px; background: #fff; margin-left: 1px; padding-left: 1px; font-weight: bold; line-height: 17px; letter-spacing: -0.6px; }
.r-status { height: 20px; margin-top: 3px; border-top: 1px solid #c9d0e2; display: grid; grid-template-columns: 50px 88px 88px 88px 88px 168px 60px; text-align: center; line-height: 19px; }
.r-status span { border-right: 1px solid #c5cce0; }
.r-status .layer { display: flex; align-items: center; gap: 2px; padding-left: 3px; }
.layer i { width: 14px; height: 14px; background: #000; }
.r-status b { background: #e2f0fb; text-align: left; padding-left: 5px; }

.gh { width: 770px; height: 738px; background: #f0f0f0; border: 1px solid #555; border-bottom: 0; display: flex; flex-direction: column; white-space: nowrap; box-shadow: -1px 0 5px rgba(0,0,0,.45); position: relative; }
.gh > * { flex: none; }
.g-title { height: 31px; background: #fff; display: flex; align-items: center; justify-content: space-between; padding-left: 7px; letter-spacing: 0.3px; }
.g-menu { height: 26px; background: #fff; display: grid; grid-template-columns: 37px 39px 44px 57px 63px 44px 86px 1fr auto; padding: 0 10px 0 12px; align-items: center; }
.g-menu em { font-style: normal; letter-spacing: -0.4px; }
.g-tabs { height: 23px; color: #777; display: grid; grid-template-columns: 36px 39px 35px 35px 34px 33px 35px 33px 35px 36px 71px 46px 71px 28px 28px 28px 28px 28px 28px 28px; text-align: center; line-height: 23px; letter-spacing: -0.35px; }
.g-tabs .on { background: #fdfdfd; color: #111; border: 1px solid #888; border-bottom: 0; border-radius: 6px 6px 0 0; line-height: 21px; letter-spacing: -0.5px; }
.ribbon { height: 77px; border-top: 1px solid #999; border-radius: 6px 6px 0 0; background: linear-gradient(#fcfcfc, #d8d8d8 20px, #ececec); display: grid; grid-template-columns: 99px 99px 127px 99px 99px 127px 33px 33px; gap: 3px; padding: 1px 0 0 2px; }
.ribbon .grp { height: 74px; min-width: 0; border: 1px solid #777; border-radius: 4px; background: linear-gradient(#d2d2d2, #f0f0f0); overflow: hidden; }
.sep { stroke: #bbb; }
.cap { height: 14px; background: linear-gradient(#111, #303030); color: #fff; text-align: center; font-size: 11px; line-height: 13px; overflow: hidden; padding: 0 1px; }
.cap.tight { letter-spacing: -0.55px; }
.cap.up { line-height: 9px; letter-spacing: -0.45px; padding: 0; }
.cap.plus { display: flex; justify-content: center; letter-spacing: 0; }
.cap.plus::after { content: "✦"; color: #999; font-size: 9px; margin: 0 2px 0 auto; }
.cap.plus::before { content: ""; margin-right: auto; width: 10px; }
.mono { font: 11px "Liberation Mono", monospace; letter-spacing: 0; }
.mono.b { font-weight: bold; font-size: 12px; }
.epw { font: bold 6px "Liberation Mono", monospace; }
.kw { font: bold 6px "Liberation Sans", sans-serif; fill: #fff; }
.bigp, .canvas .bigp { font: bold 16px "Liberation Serif", serif; fill: #eee; stroke: #222; stroke-width: 2px; paint-order: stroke; letter-spacing: 0; }
.six { font: bold 8px "Open Sans", sans-serif; fill: #fff; }
.female { font: bold 13px "DejaVu Sans", sans-serif; fill: #c8185a; }
.g-tools { height: 32px; margin: 10px 2px 0 0; border: solid #777; border-width: 1px 0 0 1px; background: linear-gradient(#fff, #f2f2f2); display: flex; align-items: center; }
.zoomsel { width: 136px; height: 23px; border: 1px solid #777; background: #fff; display: flex; align-items: center; justify-content: space-between; padding: 0 3px 0 3px; }
.grow { flex: 1; }
.canvas { margin-left: 1px; }
.canvas text, #slider text { font: 7.8px "Open Sans", "Noto Sans", sans-serif; letter-spacing: 0; fill: #111; text-rendering: geometricPrecision; }
.canvas text.cour { font: 8px "Liberation Mono", monospace; fill: #444; }
.canvas text.true { font: bold 9.5px "Liberation Mono", monospace; fill: #fff; }
.canvas text.zed { font: 14px "Liberation Serif", serif; }
.g-status { height: 24px; border-top: 1px solid #fff; display: flex; align-items: center; padding: 3px 2px 0 6px; color: #777; }
.g-status b { color: #111; margin-right: auto; letter-spacing: 0; }
.g-status span { margin-right: 17px; letter-spacing: -0.5px; }
.g-status svg { align-self: flex-end; }

.taskbar { height: 30px; background: #101010; color: #fff; display: flex; align-items: center; }
.start { width: 537px; padding-left: 9px; }
.apps { display: flex; height: 30px; }
.apps span { width: 37px; height: 30px; padding: 6px 9px 0; position: relative; }
.apps svg { width: 18px; height: 18px; }
.apps .act { background: #333; }
.apps .run { background-image: linear-gradient(#76b9ed, #76b9ed); background-size: 28px 2px; background-position: 50% 100%; background-repeat: no-repeat; }
.apps .act.run { background-size: 37px 2px; }
.tray { margin-left: auto; }
.clock { width: 62px; display: flex; flex-direction: column; text-align: center; line-height: 14px; margin-left: 1px; letter-spacing: -0.4px; }
.note { margin: 2px 0 0 13px; }
.peek { width: 1px; height: 30px; background: #555; margin-left: 19px; margin-right: 4px; }
```
